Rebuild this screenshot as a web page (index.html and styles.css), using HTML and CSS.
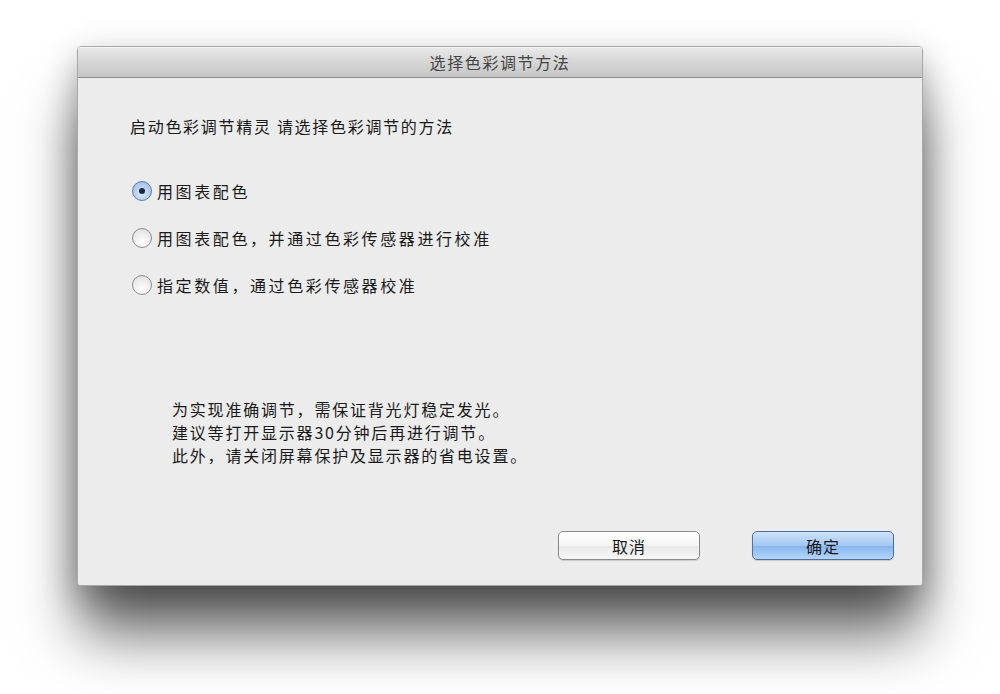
FILE: index.html
```html
<!DOCTYPE html>
<html lang="zh-CN">
<head>
    <meta charset="UTF-8">
    <meta name="viewport" content="width=device-width, initial-scale=1.0">
    <title>选择色彩调节方法</title>
    <link rel="stylesheet" href="styles.css">
</head>
<body>
    <div class="dialog">
        <div class="titlebar">选择色彩调节方法</div>
        <div class="content">
            <p class="intro">启动色彩调节精灵 请选择色彩调节的方法</p>

            <div class="options">
                <label class="option">
                    <span class="radio checked"></span>
                    用图表配色
                </label>
                <label class="option">
                    <span class="radio"></span>
                    用图表配色，并通过色彩传感器进行校准
                </label>
                <label class="option">
                    <span class="radio"></span>
                    指定数值，通过色彩传感器校准
                </label>
            </div>

            <div class="note">
                <p>为实现准确调节，需保证背光灯稳定发光。</p>
                <p>建议等打开显示器30分钟后再进行调节。</p>
                <p>此外，请关闭屏幕保护及显示器的省电设置。</p>
            </div>

            <div class="actions">
                <button class="btn">取消</button>
                <button class="btn btn-default">确定</button>
            </div>
        </div>
    </div>
</body>
</html>
```

FILE: styles.css
```css
* {
    margin: 0;
    padding: 0;
    box-sizing: border-box;
}

body {
    font-family: 'Noto Sans CJK SC', 'Noto Sans', sans-serif;
    background-color: #fff;
    color: #1a1a1a;
    padding: 46px 0 0 77px;
    height: 100vh;
    overflow: hidden;
}

.dialog {
    width: 846px;
    height: 540px;
    background-color: #ececec;
    border: 1px solid #a8a8a8;
    border-radius: 4px 4px 3px 3px;
    box-shadow: 0 52px 56px -4px rgba(0, 0, 0, 0.6), 0 12px 34px rgba(0, 0, 0, 0.3);
    display: flex;
    flex-direction: column;
    overflow: hidden;
}

.titlebar {
    height: 31px;
    line-height: 30px;
    text-align: center;
    font-size: 16px;
    letter-spacing: 1.6px;
    color: #444;
    background: linear-gradient(#ebebeb, #d9d9d9 40%, #c6c6c6);
    border-bottom: 1px solid #8e8e8e;
    box-shadow: inset 0 1px 0 #f6f6f6;
}

.content {
    flex: 1;
    padding: 36px 28px 25px 52px;
    display: flex;
    flex-direction: column;
}

.intro {
    font-size: 16px;
    letter-spacing: 1.7px;
    line-height: 24px;
}

.options {
    margin-top: 41px;
    display: flex;
    flex-direction: column;
    gap: 23px;
}

.option {
    display: flex;
    align-items: center;
    gap: 5px;
    font-size: 16px;
    letter-spacing: 2.6px;
    line-height: 24px;
}

.radio {
    width: 20px;
    height: 20px;
    margin-left: 2px;
    border-radius: 50%;
    border: 1px solid #8c8c8c;
    background: radial-gradient(circle at 50% 70%, #ffffff, #e6e6e6 70%, #cfcfcf);
    display: flex;
    align-items: center;
    justify-content: center;
}

.radio.checked {
    border-color: #5f7ea6;
    background: radial-gradient(circle at 50% 65%, #dbe9fb, #a9c6ec 70%, #7fa4d6);
}

.radio.checked::after {
    content: '';
    width: 6px;
    height: 6px;
    border-radius: 50%;
    background-color: #1c2a3c;
}

.note {
    margin: 101px 0 0 42px;
    font-size: 16px;
    letter-spacing: 1.8px;
    line-height: 23px;
}

.actions {
    margin-top: auto;
    display: flex;
    justify-content: flex-end;
    gap: 52px;
}

.btn {
    width: 142px;
    height: 29px;
    font-family: inherit;
    font-size: 16px;
    letter-spacing: 1px;
    color: #1a1a1a;
    border: 1px solid #8a8a8a;
    border-radius: 5px;
    background: linear-gradient(#ffffff, #f4f4f4 50%, #e8e8e8 51%, #f7f7f7);
    box-shadow: 0 1px 1px rgba(0, 0, 0, 0.15);
    cursor: pointer;
}

.btn-default {
    border-color: #4f6f9c;
    background: linear-gradient(#cfe2fa, #a3c8f3 50%, #85b5ef 51%, #b4d5fb);
}
```
